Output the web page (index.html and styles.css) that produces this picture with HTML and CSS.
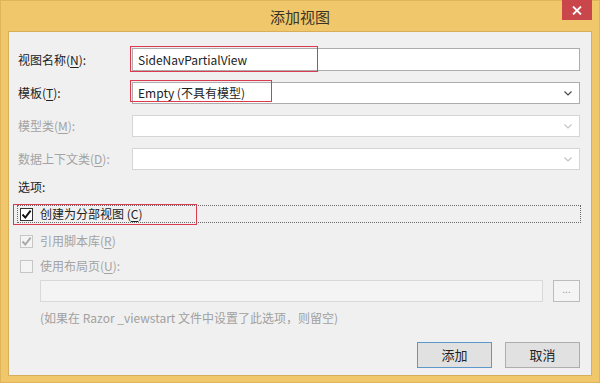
FILE: index.html
```html
<!DOCTYPE html>
<html lang="zh-CN">
<head>
    <meta charset="UTF-8">
    <title>添加视图</title>
    <link rel="stylesheet" href="styles.css">
</head>
<body>
    <div class="window">
        <div class="titlebar">
            <span class="title">添加视图</span>
            <span class="close">
                <svg width="10" height="9" viewBox="0 0 10 9"><path d="M1 0.5 L9 8.5 M9 0.5 L1 8.5" stroke="#fff" stroke-width="1.8"/></svg>
            </span>
        </div>
        <div class="client">
            <div class="form">
                <label class="label">视图名称(<u>N</u>):</label>
                <div class="field tall">
                    <span class="value">SideNavPartialView</span>
                    <span class="mark mark-name"></span>
                </div>

                <label class="label">模板(<u>T</u>):</label>
                <div class="field">
                    <span class="value">Empty (不具有模型)</span>
                    <svg class="chevron" width="8" height="5" viewBox="0 0 8 5"><path d="M0.5 0.5 L4 4 L7.5 0.5" fill="none" stroke="#4a4a4a" stroke-width="1.2"/></svg>
                    <span class="mark mark-template"></span>
                </div>

                <label class="label disabled">模型类(<u>M</u>):</label>
                <div class="field off">
                    <span class="value"></span>
                    <svg class="chevron" width="8" height="5" viewBox="0 0 8 5"><path d="M0.5 0.5 L4 4 L7.5 0.5" fill="none" stroke="#c4c4c4" stroke-width="1.2"/></svg>
                </div>

                <label class="label disabled">数据上下文类(<u>D</u>):</label>
                <div class="field off">
                    <span class="value"></span>
                    <svg class="chevron" width="8" height="5" viewBox="0 0 8 5"><path d="M0.5 0.5 L4 4 L7.5 0.5" fill="none" stroke="#c4c4c4" stroke-width="1.2"/></svg>
                </div>
            </div>

            <div class="section">选项:</div>

            <div class="check-row focused">
                <span class="box">
                    <svg width="11" height="11" viewBox="0 0 11 11"><path d="M1.5 5.5 L4.3 8.6 L9.6 1.6" fill="none" stroke="#111" stroke-width="1.9"/></svg>
                </span>
                <span>创建为分部视图 (<u>C</u>)</span>
                <span class="mark mark-check"></span>
            </div>

            <div class="check-row r2 disabled">
                <span class="box">
                    <svg width="11" height="11" viewBox="0 0 11 11"><path d="M1.5 5.5 L4.3 8.6 L9.6 1.6" fill="none" stroke="#a8a8a8" stroke-width="1.9"/></svg>
                </span>
                <span>引用脚本库(<u>R</u>)</span>
            </div>

            <div class="check-row r3 disabled">
                <span class="box"></span>
                <span>使用布局页(<u>U</u>):</span>
            </div>

            <div class="layout-row">
                <div class="layout-input"></div>
                <span class="browse">...</span>
            </div>

            <div class="hint">(如果在 Razor _viewstart 文件中设置了此选项，则留空)</div>

            <div class="actions">
                <span class="btn default">添加</span>
                <span class="btn">取消</span>
            </div>
        </div>
    </div>
</body>
</html>
```

FILE: styles.css
```css
* {
    margin: 0;
    padding: 0;
    box-sizing: border-box;
}
body {
    font-family: 'Noto Sans CJK SC', 'Noto Sans', sans-serif;
    font-size: 12px;
    line-height: 16px;
    color: #222;
    background: #f0c86b;
}
.window {
    width: 600px;
    height: 383px;
    background: #f0c86b;
    border: 1px solid #e0b459;
}
.titlebar {
    display: grid;
    grid-template-columns: 1fr auto 1fr;
    height: 30px;
    padding: 0 7px;
}
.title {
    grid-column: 2;
    align-self: center;
    font-size: 15px;
    line-height: 20px;
    color: #3a3428;
    padding-top: 1px;
}
.close {
    grid-column: 3;
    justify-self: end;
    align-self: start;
    width: 30px;
    height: 20px;
    margin-top: -1px;
    background: #c9474b;
    display: flex;
    align-items: center;
    justify-content: center;
}
.client {
    margin: 0 7px;
    height: 345px;
    background: #f0f0f0;
    border: 1px solid #d9ae58;
    padding: 0 11px 0 9px;
}
/* form grid */
.form {
    display: grid;
    grid-template-columns: 114px 1fr;
    row-gap: 11px;
    padding-top: 16px;
}
.label {
    align-self: center;
    color: #222;
}
.label.disabled {
    color: #a3a3a3;
}
u {
    text-decoration: underline;
    text-underline-offset: 2px;
}
.field {
    position: relative;
    height: 22px;
    background: #fff;
    border: 1px solid #acacac;
    display: flex;
    align-items: center;
    padding: 0 7px 0 5px;
}
.field.tall {
    height: 23px;
}
.field.off {
    border-color: #d5d5d5;
}
.value {
    flex: 1;
    font-size: 12px;
    color: #222;
}
.chevron {
    flex: none;
}
.mark {
    position: absolute;
    border: 1px solid #dc3a4e;
}
.mark-name {
    left: -3px;
    top: -3px;
    width: 188px;
    height: 26px;
}
.mark-template {
    left: -3px;
    top: -3px;
    width: 142px;
    height: 22px;
}
/* options */
.section {
    margin-top: 9px;
}
.check-row {
    position: relative;
    display: flex;
    align-items: center;
    gap: 7px;
    height: 16px;
    margin-top: 11px;
    padding-left: 2px;
}
.check-row.focused {
    outline: 1px dotted #6a6a6a;
}
.check-row.r2 {
    margin-top: 11px;
}
.check-row.r3 {
    margin-top: 9px;
}
.check-row.disabled {
    color: #a3a3a3;
}
.box {
    width: 13px;
    height: 13px;
    border: 1px solid #333;
    background: #fff;
    display: flex;
    align-items: center;
    justify-content: center;
}
.disabled .box {
    border-color: #c6c6c6;
    background: #f4f4f4;
}
.mark-check {
    left: -5px;
    top: -2px;
    width: 184px;
    height: 21px;
}
.layout-row {
    display: flex;
    gap: 10px;
    margin: 6px 0 0 22px;
    height: 22px;
}
.layout-input {
    flex: 1;
    border: 1px solid #d9d9d9;
    background: #f4f4f4;
}
.browse {
    width: 27px;
    border: 1px solid #bcbcbc;
    background: #f4f4f4;
    color: #9a9a9a;
    font-size: 10px;
    line-height: 16px;
    text-align: center;
}
.hint {
    margin: 8px 0 0 22px;
    color: #a0a0a0;
}
.actions {
    display: flex;
    justify-content: flex-end;
    gap: 13px;
    margin-top: 16px;
}
.btn {
    width: 75px;
    height: 26px;
    background: #e1e1e1;
    border: 1px solid #adadad;
    display: flex;
    align-items: center;
    justify-content: center;
    font-size: 13px;
    color: #222;
}
.btn.default {
    border-color: #5c98cc;
}
```
